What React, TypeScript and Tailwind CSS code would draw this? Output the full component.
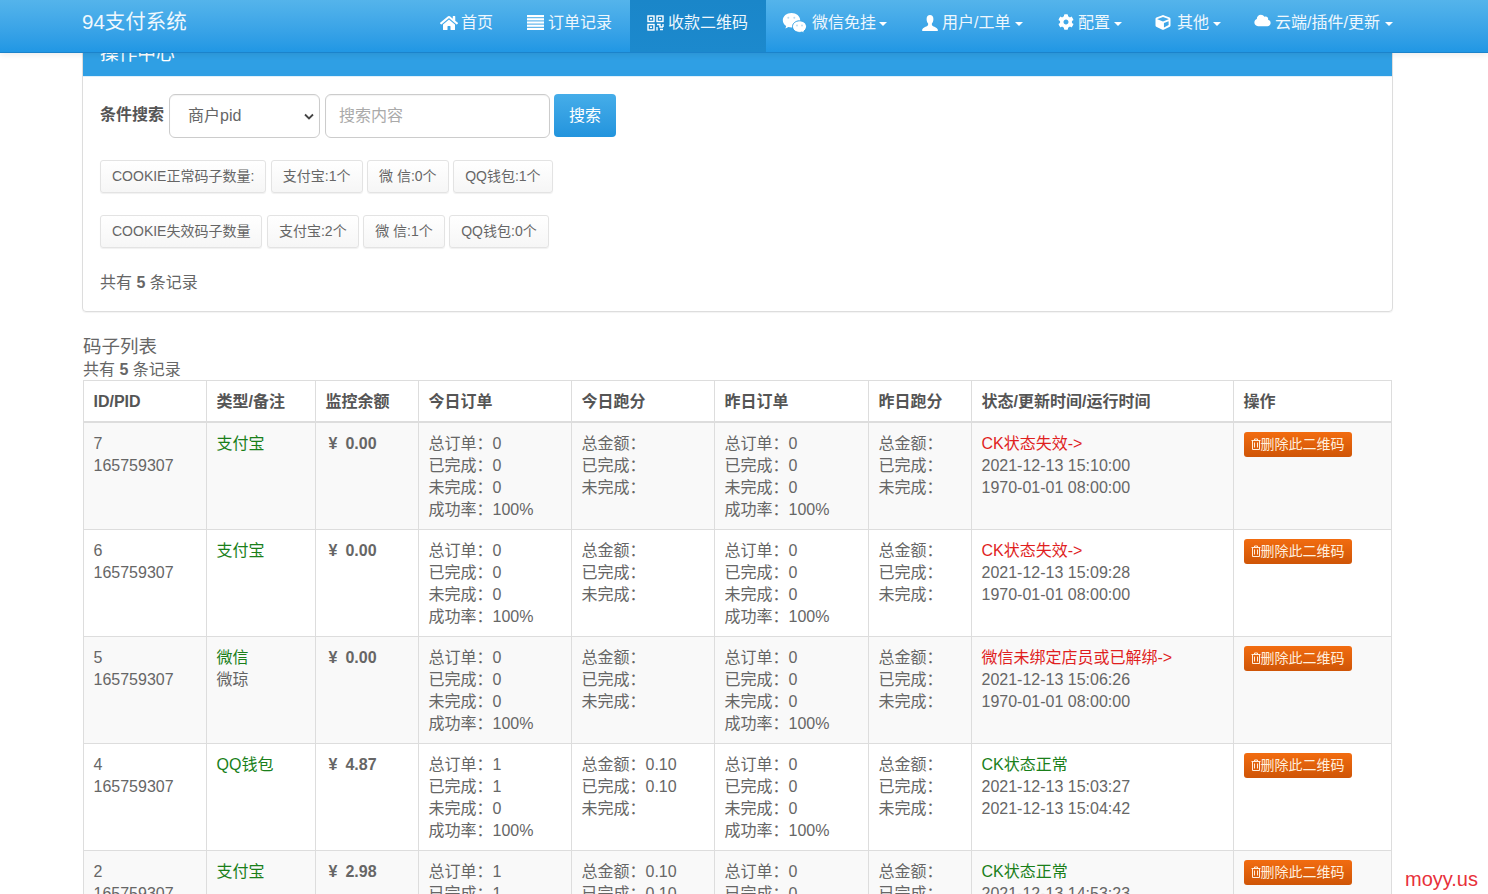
import React from "react";
import { FaHome, FaCog, FaCube, FaCloud } from "react-icons/fa";

const font = "[font-family:'Liberation_Sans','Noto_Sans_CJK_SC',sans-serif]";

const ListIcon = () => (
  <svg width="17" height="15" viewBox="0 0 17 15" fill="#fff">
    <rect x="0" y="0" width="17" height="2.2" />
    <rect x="0" y="3.2" width="17" height="2.2" />
    <rect x="0" y="6.4" width="17" height="2.2" />
    <rect x="0" y="9.6" width="17" height="2.2" />
    <rect x="0" y="12.8" width="17" height="2.2" />
  </svg>
);

const QrIcon = () => (
  <svg width="17" height="16" viewBox="0 0 17 16" fill="none" stroke="#fff" strokeWidth="1.4">
    <rect x="1" y="1" width="6" height="5.5" />
    <rect x="10" y="1" width="6" height="5.5" />
    <rect x="1" y="9.5" width="6" height="5.5" />
    <path d="M3 3.7h2M12 3.7h2M3 12.2h2" strokeWidth="1.6" />
    <path d="M10 9.5h3v2.5h3M16 9v3M10 12v3.5M13 14.5h3" />
  </svg>
);

const WeChatIcon = () => (
  <svg width="25" height="22" viewBox="0 0 25 22">
    <path d="M9.5 1C4.6 1 .8 4.2.8 8.2c0 2.4 1.3 4.4 3.4 5.8l-.8 2.6 3-1.6c1 .3 1.9.4 3.1.4 4.9 0 8.7-3.2 8.7-7.2S14.400 1 9.500 1z" fill="#fff" />
    <path d="M17.500 8.800c-3.900 0-7 2.600-7 5.800s3.100 5.800 7 5.800c.9 0 1.700-.1 2.500-.4l2.500 1.300-.7-2.100c1.700-1.100 2.700-2.800 2.700-4.600 0-3.200-3.100-5.800-7-5.800z" fill="#fff" stroke="#2f9fe4" strokeWidth="1" />
    <circle cx="6.300" cy="5.800" r="1" fill="#b9d9ee" />
    <circle cx="12.300" cy="5.800" r="1" fill="#b9d9ee" />
    <circle cx="15" cy="13.500" r=".9" fill="#b9d9ee" />
    <circle cx="20" cy="13.500" r=".9" fill="#b9d9ee" />
  </svg>
);

const UserIcon = () => (
  <svg width="16" height="16" viewBox="0 0 16 16" fill="#fff">
    <path d="M8 0C5.900 0 4.600 1.600 4.600 3.900c0 1.900.7 3.700 1.500 4.700.2.800.1 1.400-.3 1.800C4.300 11.700.8 12.300.2 14.600V16h15.600v-1.400c-.6-2.300-4.100-2.900-5.600-4.200-.4-.4-.5-1-.3-1.800.8-1 1.500-2.800 1.500-4.700C11.400 1.600 10.100 0 8 0z" />
  </svg>
);

const TrashIcon = () => (
  <svg width="10" height="12" viewBox="0 0 10 12" fill="none" stroke="#ffeedd" strokeWidth="1" className="shrink-0">
    <path d="M.5 2.500h9M3.500 2.500V1h3v1.500M1.500 2.500v9h7v-9M3.500 4.500v5M6.500 4.500v5" />
  </svg>
);

const nav = [
  { label: "首页", icon: <FaHome className="w-[18px] h-[16px]" />, w: "w-[87px]", gap: "gap-[3px]", pl: "pl-[17px]", caret: "" },
  { label: "订单记录", icon: <ListIcon />, w: "w-[120px]", gap: "gap-[4px]", pl: "pl-[17px]", caret: "" },
  { label: "收款二维码", icon: <QrIcon />, w: "w-[136px]", gap: "gap-[4px]", pl: "pl-[17px]", active: true, caret: "" },
  { label: "微信免挂", icon: <WeChatIcon />, w: "w-[139px]", gap: "gap-[5px]", pl: "pl-[16px]", caret: "-ml-[2px]" },
  { label: "用户/工单", icon: <UserIcon />, w: "w-[136px]", gap: "gap-[4px]", pl: "pl-[17px]", caret: "ml-[1px]" },
  { label: "配置", icon: <FaCog className="w-[16px] h-[16px] -translate-y-[1px]" />, w: "w-[97px]", gap: "gap-[4px]", pl: "pl-[17px]", caret: "ml-0" },
  { label: "其他", icon: <FaCube className="w-[16px] h-[15px]" />, w: "w-[100px]", gap: "gap-[6px]", pl: "pl-[17px]", caret: "-ml-[2px]" },
  { label: "云端/插件/更新", icon: <FaCloud className="w-[17px] h-[13px] -translate-y-[2px]" />, w: "w-[172px]", gap: "gap-[4px]", pl: "pl-[16px]", caret: "ml-[1px]" },
];

type Row = {
  id: string; type: string; note?: string; bal: string;
  t: string[]; tm: string[]; y: string[]; ym: string[];
  status: string; ok: boolean; upd: string; run: string;
};

const zero = ["0", "0", "0", "100%"];
const blank = ["", "", ""];

const rows: Row[] = [
  { id: "7", type: "支付宝", bal: "0.00", t: zero, tm: blank, y: zero, ym: blank, status: "CK状态失效->", ok: false, upd: "2021-12-13 15:10:00", run: "1970-01-01 08:00:00" },
  { id: "6", type: "支付宝", bal: "0.00", t: zero, tm: blank, y: zero, ym: blank, status: "CK状态失效->", ok: false, upd: "2021-12-13 15:09:28", run: "1970-01-01 08:00:00" },
  { id: "5", type: "微信", note: "微琼", bal: "0.00", t: zero, tm: blank, y: zero, ym: blank, status: "微信未绑定店员或已解绑->", ok: false, upd: "2021-12-13 15:06:26", run: "1970-01-01 08:00:00" },
  { id: "4", type: "QQ钱包", bal: "4.87", t: ["1", "1", "0", "100%"], tm: ["0.10", "0.10", ""], y: zero, ym: blank, status: "CK状态正常", ok: true, upd: "2021-12-13 15:03:27", run: "2021-12-13 15:04:42" },
  { id: "2", type: "支付宝", bal: "2.98", t: ["1", "1", "0", "100%"], tm: ["0.10", "0.10", ""], y: zero, ym: blank, status: "CK状态正常", ok: true, upd: "2021-12-13 14:53:23", run: "2021-12-13 14:54:42" },
];

const headers = ["ID/PID", "类型/备注", "监控余额", "今日订单", "今日跑分", "昨日订单", "昨日跑分", "状态/更新时间/运行时间", "操作"];
const widths = ["w-[123px]", "w-[109px]", "w-[103px]", "w-[153px]", "w-[143px]", "w-[154px]", "w-[103px]", "w-[262px]", "w-[158px]"];

const Td = ({ children }: { children: React.ReactNode }) => (
  <td className="border border-[#ddd] align-top pt-[10px] pb-[8px] px-[9.5px] leading-[22px]">{children}</td>
);

const Orders = ({ v }: { v: string[] }) => (
  <>
    <div>总订单：{v[0]}</div>
    <div>已完成：{v[1]}</div>
    <div>未完成：{v[2]}</div>
    <div>成功率：{v[3]}</div>
  </>
);

const Money = ({ v }: { v: string[] }) => (
  <>
    <div>总金额：{v[0]}</div>
    <div>已完成：{v[1]}</div>
    <div>未完成：{v[2]}</div>
  </>
);

const Pill = ({ children }: { children: React.ReactNode }) => (
  <span className="inline-flex items-center justify-center h-[33px] px-[11px] border border-[#e3e3e3] rounded-[3px] bg-gradient-to-b from-white to-[#f6f6f6] text-[14px] text-[#666] whitespace-nowrap shadow-[0_1px_1px_rgba(0,0,0,0.06)]">
    {children}
  </span>
);

export default function App() {
  return (
    <div className={`relative h-[894px] overflow-hidden bg-white text-[16px] text-[#666] ${font}`}>
      <header className="relative z-10 h-[53px] border-b border-[#1b83cb] bg-gradient-to-b from-[#54b4eb] to-[#2097e4] shadow-[0_2px_6px_rgba(0,0,0,0.08)] flex text-white">
        <div className="w-[423px] pl-[82px] text-[20.5px] leading-[44px] text-[#f0f8fd]">94支付系统</div>
        <nav className="flex">
          {nav.map((n) => (
            <div
              key={n.label}
              className={`${n.w} ${n.pl} ${n.gap} h-[52px] flex items-center pb-[7px] ${n.active ? "bg-gradient-to-b from-[#1a86c9] to-[#1c89cd]" : ""}`}
            >
              <span className="shrink-0 block">{n.icon}</span>
              <span className="text-[16px] whitespace-nowrap text-[#eef7fd]">{n.label}</span>
              {n.caret && <span className={`${n.caret} mt-[3px] w-0 h-0 border-x-[4px] border-x-transparent border-t-[4px] border-t-white`} />}
            </div>
          ))}
        </nav>
      </header>

      <main className="-mt-[17px] pl-[82px] w-[1393px]">
        <section className="border border-[#ddd] rounded-b-[4px] shadow-[0_1px_1px_rgba(0,0,0,0.05)] h-[276px]">
          <div className="h-[40px] bg-[#2f9fe4] text-white text-[18.7px] px-[17px] pt-[8px] leading-[18px] border-b border-[#dff0fb]">操作中心</div>
          <div className="px-[17px] pt-[17px]">
            <div className="flex items-start h-[44px]">
              <label className="font-bold text-[#555] w-[69px] leading-[42px]">条件搜索</label>
              <div className="relative w-[151px] h-[44px] border border-[#ccc] rounded-[6px] flex items-center pl-[18px] text-[#666] shadow-[inset_0_1px_1px_rgba(0,0,0,0.05)]">
                商户pid
                <svg className="absolute right-[5px] top-[18px]" width="10" height="7" viewBox="0 0 10 7"><path d="M1 1.500 5 5.500 9 1.500" fill="none" stroke="#444" strokeWidth="1.800" /></svg>
              </div>
              <div className="ml-[5px] w-[225px] h-[44px] border border-[#ccc] rounded-[6px] flex items-center pl-[13px] text-[#aaa] shadow-[inset_0_1px_1px_rgba(0,0,0,0.05)]">搜索内容</div>
              <div className="ml-[4px] w-[62px] h-[43px] rounded-[4px] bg-gradient-to-b from-[#45ade9] to-[#2294dd] text-white flex items-center justify-center">搜索</div>
            </div>
            <div className="flex gap-[4.5px] mt-[22px]">
              <Pill>COOKIE正常码子数量:</Pill>
              <Pill>支付宝:1个</Pill>
              <Pill>微 信:0个</Pill>
              <Pill>QQ钱包:1个</Pill>
            </div>
            <div className="flex gap-[4.5px] mt-[22px]">
              <Pill>COOKIE失效码子数量</Pill>
              <Pill>支付宝:2个</Pill>
              <Pill>微 信:1个</Pill>
              <Pill>QQ钱包:0个</Pill>
            </div>
            <div className="mt-[23px] leading-[24px]">共有 <b>5</b> 条记录</div>
          </div>
        </section>

        <div className="mt-[23px] text-[18.500px] leading-[24px] pl-[1px]">码子列表</div>
        <div className="leading-[22px] pl-[1px]">共有 <b>5</b> 条记录</div>

        <table className="ml-[1px] -mt-[1px] table-fixed border-collapse w-[1308px]">
          <colgroup>
            {widths.map((w, i) => <col key={i} className={w} />)}
          </colgroup>
          <thead>
            <tr className="h-[41px]">
              {headers.map((h) => (
                <th key={h} className="border border-[#ddd] border-b-2 text-left font-bold text-[#555] px-[9.5px] pt-[2px] align-middle">{h}</th>
              ))}
            </tr>
          </thead>
          <tbody>
            {rows.map((r, i) => (
              <tr key={r.id} className={`h-[107px] ${i % 2 === 0 ? "bg-[#f9f9f9]" : "bg-white"}`}>
                <Td><div>{r.id}</div><div>165759307</div></Td>
                <Td><div className="text-[#1a7f1a]">{r.type}</div>{r.note && <div>{r.note}</div>}</Td>
                <Td><b className="pl-[3px]">¥<span className="ml-[8px]">{r.bal}</span></b></Td>
                <Td><Orders v={r.t} /></Td>
                <Td><Money v={r.tm} /></Td>
                <Td><Orders v={r.y} /></Td>
                <Td><Money v={r.ym} /></Td>
                <Td>
                  <div className={r.ok ? "text-[#1a7f1a]" : "text-[#e01f1f]"}>{r.status}</div>
                  <div>{r.upd}</div>
                  <div>{r.run}</div>
                </Td>
                <Td>
                  <span className="flex w-fit items-center h-[25px] -mt-[1px] pl-[7px] pr-[7px] rounded-[3px] bg-gradient-to-b from-[#f26c10] to-[#cf5507] text-[#ffeedd] text-[14px] whitespace-nowrap">
                    <TrashIcon />删除此二维码
                  </span>
                </Td>
              </tr>
            ))}
          </tbody>
        </table>
      </main>

      <div className="absolute right-[10px] bottom-[3px] text-[20px] leading-[24px] text-[#e8313a]">moyy.us</div>
    </div>
  );
}
